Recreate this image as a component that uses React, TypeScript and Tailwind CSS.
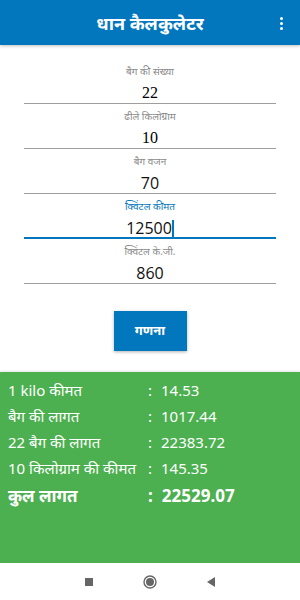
import { useState } from "react";

const fields = [
    { label: "बैग की संख्या", value: "22", serif: true },
    { label: "ढीले किलोग्राम", value: "10", serif: true },
    { label: "बैग वजन", value: "70", serif: false },
    { label: "क्विंटल कीमत", value: "12500", serif: false, active: true },
    { label: "क्विंटल के.जी.", value: "860", serif: false },
];

const results = [
    { label: "1 kilo कीमत", value: "14.53" },
    { label: "बैग की लागत", value: "1017.44" },
    { label: "22 बैग की लागत", value: "22383.72" },
    { label: "10 किलोग्राम की कीमत", value: "145.35" },
];

const App = () => {
    const [values] = useState(fields);

    return (
        <div className="w-[300px] h-[600px] flex flex-col bg-white font-['Noto_Sans',sans-serif] overflow-hidden">
            {/* Toolbar */}
            <div className="relative h-[45px] shrink-0 bg-[#0277bd] flex items-center justify-center shadow-[0_1px_3px_rgba(0,0,0,0.25)]">
                <h1 className="text-white text-[18px] font-bold leading-none">धान कैलकुलेटर</h1>
                <div className="absolute right-[17px] top-[17px] flex flex-col gap-[2px]">
                    <span className="w-[3px] h-[3px] rounded-full bg-white" />
                    <span className="w-[3px] h-[3px] rounded-full bg-white" />
                    <span className="w-[3px] h-[3px] rounded-full bg-white" />
                </div>
            </div>

            {/* Form */}
            <div className="px-6 pt-[14px]">
                {values.map((f) => (
                    <div
                        key={f.label}
                        className={
                            f.active
                                ? "h-[45px] pt-[5px] border-b-2 border-[#0277bd] flex flex-col items-center"
                                : "h-[45px] pt-[5px] border-b border-[#9e9e9e] flex flex-col items-center"
                        }
                    >
                        <span className={f.active ? "text-[10px] leading-[15px] text-[#0277bd]" : "text-[10px] leading-[15px] text-[#8a8a8a]"}>
                            {f.label}
                        </span>
                        <span
                            className={
                                f.serif
                                    ? "mt-[4px] text-[16px] leading-[20px] text-black font-['Liberation_Serif',serif]"
                                    : "mt-[4px] text-[16px] leading-[20px] text-[#111] font-['Open_Sans',sans-serif]"
                            }
                        >
                            {f.value}
                            {f.active && <span className="inline-block w-[2px] h-[17px] bg-[#0277bd] align-[-3px]" />}
                        </span>
                    </div>
                ))}
            </div>

            <div className="flex justify-center mt-[27px]">
                <button className="w-[73px] h-[40px] bg-[#0277bd] text-white text-[13px] font-bold shadow-[0_1px_3px_rgba(0,0,0,0.3)]">
                    गणना
                </button>
            </div>

            {/* Results */}
            <div className="mt-[21px] flex-1 bg-[#4caf50] text-white pt-[5px] shadow-[0_-1px_2px_rgba(0,0,0,0.1)]">
                {results.map((r) => (
                    <div key={r.label} className="flex items-center h-[26px] text-[15px]">
                        <span className="w-[148px] pl-[8px]">{r.label}</span>
                        <span>:</span>
                        <span className="ml-[9px]">{r.value}</span>
                    </div>
                ))}
                <div className="flex items-center h-[30px] text-[17px] font-bold">
                    <span className="w-[148px] pl-[8px]">कुल लागत</span>
                    <span>:</span>
                    <span className="ml-[9px]">22529.07</span>
                </div>
            </div>

            {/* Nav bar */}
            <div className="h-[37px] shrink-0 bg-white flex items-center justify-center gap-[50px]">
                <span className="w-[8px] h-[8px] bg-[#666]" />
                <svg width="14" height="14" viewBox="0 0 14 14">
                    <circle cx="7" cy="7" r="6" fill="none" stroke="#666" strokeWidth="1.4" />
                    <circle cx="7" cy="7" r="4" fill="#666" />
                </svg>
                <svg width="9" height="10" viewBox="0 0 9 10">
                    <polygon points="8,0 8,10 0,5" fill="#666" />
                </svg>
            </div>
        </div>
    );
};

export default App;
